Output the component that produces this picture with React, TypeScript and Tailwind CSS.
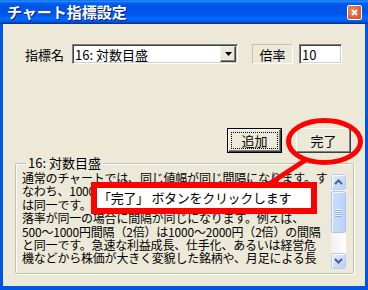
import React from 'react';

// Body text of the description box, one entry per visual line
const LINES = [
  '通常のチャートでは、同じ値幅が同じ間隔になります。す',
  'なわち、1000円～2000円の間隔と2000円～3000円の',
  'は同一です。対数目盛では、値幅ではなく、上昇率・下',
  '落率が同一の場合に間隔が同じになります。例えば、',
  '500～1000円間隔（2倍）は1000～2000円（2倍）の間隔',
  'と同一です。急速な利益成長、仕手化、あるいは経営危',
  '機などから株価が大きく変貌した銘柄や、月足による長',
];

const Chevron = ({ up }: { up?: boolean }) => (
  <svg width="9" height="6" viewBox="0 0 9 6">
    <path
      d={up ? 'M1 5 L4.5 1.5 L8 5' : 'M1 1 L4.5 4.5 L8 1'}
      fill="none"
      stroke="#4d6185"
      strokeWidth="2"
    />
  </svg>
);

const ScrollButton = ({ up }: { up?: boolean }) => (
  <div className="h-[16px] rounded-[2px] border border-[#b7cbf9] bg-[linear-gradient(135deg,#e1eafe,#b9cffc)] shadow-[inset_1px_1px_0_#fff] flex items-center justify-center">
    <Chevron up={up} />
  </div>
);

const App = () => {
  return (
    <div className="relative w-[368px] h-[290px] bg-[#0054e3] flex flex-col font-['Noto_Sans_CJK_JP',sans-serif] text-black overflow-hidden">
      {/* Title bar */}
      <div className="h-[24px] shrink-0 flex items-center justify-between pl-[7px] pr-[6px] bg-[linear-gradient(to_bottom,#0058ee_0%,#3593ff_4%,#288eff_6%,#127dff_8%,#036ffc_10%,#0262ee_14%,#0057e5_20%,#0054e3_24%,#0055eb_56%,#005bf5_66%,#026afe_76%,#0062ef_86%,#0052d6_92%,#0040ab_96%,#003092_100%)]">
        <span className="text-white text-[15px] font-bold leading-[24px] [text-shadow:1px_1px_0_#0a1883]">
          チャート指標設定
        </span>
        <div className="w-[15px] h-[15px] rounded-[2px] border border-white bg-[radial-gradient(circle_at_35%_35%,#f08a63,#d9441c)] flex items-center justify-center">
          <svg width="7" height="7" viewBox="0 0 7 7">
            <path d="M1 1 L6 6 M6 1 L1 6" stroke="#fff" strokeWidth="1.8" />
          </svg>
        </div>
      </div>

      {/* Dialog body */}
      <div className="flex-1 mx-[3px] mb-[4px] bg-[#ece9d8] flex flex-col">
        {/* Indicator row */}
        <div className="mt-[20px] h-[20px] flex items-center pl-[22px] text-[13px]">
          <span className="w-[47px] leading-[20px] mt-[2px]">指標名</span>
          <div className="w-[166px] h-[20px] bg-white flex items-center border border-[#808080] border-r-white border-b-white shadow-[inset_1px_1px_0_#404040,inset_-1px_-1px_0_#d4d0c8]">
            <span className="flex-1 pl-[2px] leading-[18px] mt-[1px]">16: 対数目盛</span>
            <div className="w-[16px] h-[16px] mr-[1px] bg-[#ece9d8] border border-[#f4f2e8] border-r-[#404040] border-b-[#404040] shadow-[inset_-1px_-1px_0_#808080] flex items-center justify-center">
              <svg width="7" height="4" viewBox="0 0 7 4">
                <path d="M0 0 H7 L3.5 4 Z" fill="#000" />
              </svg>
            </div>
          </div>
          <div className="ml-[14px] w-[41px] h-[20px] flex items-center justify-center border border-[#c5c2b2] border-r-white border-b-white">
            <span className="mt-[1px]">倍率</span>
          </div>
          <div className="ml-[6px] w-[43px] h-[20px] bg-white flex items-center pl-[2px] border border-[#808080] border-r-white border-b-white shadow-[inset_1px_1px_0_#404040,inset_-1px_-1px_0_#d4d0c8]">
            <span className="mt-[1px]">10</span>
          </div>
        </div>

        {/* Buttons */}
        <div className="mt-[64px] h-[25px] flex pl-[224px] text-[13px]">
          <div className="w-[55px] h-[25px] border border-black">
            <div className="h-full flex items-center justify-center border border-white border-r-[#404040] border-b-[#404040] shadow-[inset_-1px_-1px_0_#808080] bg-[#ece9d8] p-[2px]">
              <div className="w-full h-full flex items-center justify-center border border-dotted border-black">
                追加
              </div>
            </div>
          </div>
          <div className="ml-[14px] w-[55px] h-[25px] flex items-center justify-center border border-white border-r-[#404040] border-b-[#404040] shadow-[inset_-1px_-1px_0_#808080] bg-[#ece9d8]">
            完了
          </div>
        </div>

        {/* Description group */}
        <fieldset className="mt-[3px] ml-[12px] w-[339px] h-[118px] border border-[#c5c2b2] rounded-[2px] shadow-[1px_1px_0_#fff,inset_1px_1px_0_#fff] pl-[6px] pr-[6px]">
          <legend className="ml-[4px] px-[2px] text-[13px] leading-[14px]">16: 対数目盛</legend>
          <div className="flex mt-[1px]">
            <div className="w-[310px] text-[12px] leading-[13.4px] tracking-[-0.2px] overflow-hidden whitespace-nowrap">
              {LINES.map((line, i) => (
                <div key={i}>{line}</div>
              ))}
            </div>
            <div className="ml-[-1px] mt-[3px] w-[15px] h-[95px] flex flex-col bg-[linear-gradient(to_right,#f3f1ec,#fefefb)]">
              <ScrollButton up />
              <div className="mt-[1px] h-[42px] rounded-[2px] border border-[#b1c5f3] bg-[linear-gradient(to_right,#cddcfe,#bcd1fb)] shadow-[inset_1px_1px_0_#f0f5ff] flex flex-col items-center justify-center gap-[1px]">
                <div className="w-[7px] h-[1px] bg-[#eef4fe] shadow-[0_1px_0_#8cb0f8]" />
                <div className="w-[7px] h-[1px] bg-[#eef4fe] shadow-[0_1px_0_#8cb0f8]" />
                <div className="w-[7px] h-[1px] bg-[#eef4fe] shadow-[0_1px_0_#8cb0f8]" />
                <div className="w-[7px] h-[1px] bg-[#eef4fe] shadow-[0_1px_0_#8cb0f8]" />
              </div>
              <div className="flex-1" />
              <ScrollButton />
            </div>
          </div>
        </fieldset>
      </div>

      {/* Annotation: ellipse around the button and its pointer */}
      <svg className="absolute left-0 top-0 pointer-events-none" width="368" height="290">
        <line x1="307" y1="159" x2="266" y2="186" stroke="#ff0000" strokeWidth="5" />
        <ellipse cx="324.5" cy="141.5" rx="36" ry="21" fill="none" stroke="#ff0000" strokeWidth="5" />
      </svg>

      {/* Annotation callout */}
      <div className="absolute left-[91px] top-[182px] w-[226px] h-[32px] border-[6px] border-[#ff0000] bg-white flex items-center pl-[1px] text-[13px] tracking-[-0.3px] whitespace-nowrap">
        「完了」 ボタンをクリックします
      </div>
    </div>
  );
};

export default App;
